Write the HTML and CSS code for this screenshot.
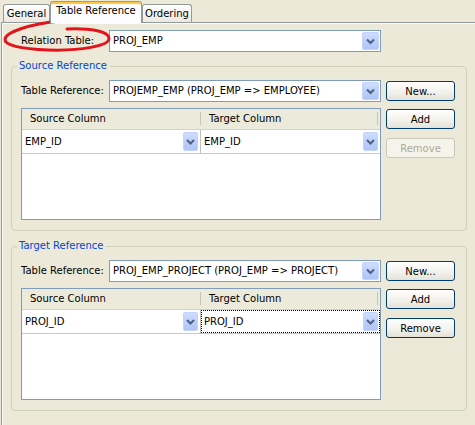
FILE: index.html
```html
<!DOCTYPE html>
<html>
<head>
<meta charset="utf-8">
<link rel="stylesheet" href="styles.css">
</head>
<body>
<div class="window">
  <div class="tabs">
    <div class="tab tab-general">General</div>
    <div class="tab active">Table Reference</div>
    <div class="tab tab-ordering">Ordering</div>
  </div>
  <div class="panel">
    <div class="relation-row">
      <span class="lbl">Relation Table:</span>
      <div class="combo"><span>PROJ_EMP</span><span class="drop"><svg viewBox="0 0 17 18" width="17" height="18"><path d="M5 7.5 L8.5 11 L12 7.5" /></svg></span></div>
    </div>

    <fieldset class="group">
      <legend>Source Reference</legend>
      <div class="group-grid">
        <span class="lbl">Table Reference:</span>
        <div class="combo"><span>PROJEMP_EMP (PROJ_EMP =&gt; EMPLOYEE)</span><span class="drop"><svg viewBox="0 0 17 18" width="17" height="18"><path d="M5 7.5 L8.5 11 L12 7.5" /></svg></span></div>
        <button class="btn">New...</button>
        <div class="gtable">
          <div class="thead">
            <div class="th th-first">Source Column</div>
            <div class="th th-second">Target Column</div>
          </div>
          <div class="tr">
            <div class="td td-first"><span>EMP_ID</span><span class="drop small"><svg viewBox="0 0 15 19" width="15" height="19"><path d="M4 8 L7.5 11.5 L11 8" /></svg></span></div>
            <div class="td td-second"><span>EMP_ID</span><span class="drop small"><svg viewBox="0 0 15 19" width="15" height="19"><path d="M4 8 L7.5 11.5 L11 8" /></svg></span></div>
          </div>
        </div>
        <div class="btn-col">
          <button class="btn">Add</button>
          <button class="btn" disabled>Remove</button>
        </div>
      </div>
    </fieldset>

    <fieldset class="group group-target">
      <legend>Target Reference</legend>
      <div class="group-grid">
        <span class="lbl">Table Reference:</span>
        <div class="combo"><span>PROJ_EMP_PROJECT (PROJ_EMP =&gt; PROJECT)</span><span class="drop"><svg viewBox="0 0 17 18" width="17" height="18"><path d="M5 7.5 L8.5 11 L12 7.5" /></svg></span></div>
        <button class="btn">New...</button>
        <div class="gtable">
          <div class="thead">
            <div class="th th-first">Source Column</div>
            <div class="th th-second">Target Column</div>
          </div>
          <div class="tr">
            <div class="td td-first"><span>PROJ_ID</span><span class="drop small"><svg viewBox="0 0 15 19" width="15" height="19"><path d="M4 8 L7.5 11.5 L11 8" /></svg></span></div>
            <div class="td td-second focus"><span>PROJ_ID</span><span class="drop small"><svg viewBox="0 0 15 19" width="15" height="19"><path d="M4 8 L7.5 11.5 L11 8" /></svg></span></div>
          </div>
        </div>
        <div class="btn-col">
          <button class="btn">Add</button>
          <button class="btn">Remove</button>
        </div>
      </div>
    </fieldset>
  </div>
</div>
<svg class="annotation" viewBox="0 0 475 60" width="475" height="60">
  <path d="M67 29 C90 28 108 31 109 38 C110 46 80 51 48 50 C20 49 4 45 5 39 C6 32 30 24 60 21" />
</svg>
</body>
</html>
```
FILE: styles.css
```css
* { box-sizing: border-box; }

html, body {
  margin: 0;
  padding: 0;
}

body {
  width: 475px;
  height: 425px;
  overflow: hidden;
  position: relative;
  background: #ece9d8;
  font-family: "DejaVu Sans", sans-serif;
  font-size: 10px;
  line-height: 12px;
  color: #000;
}

.window {
  padding-left: 1px;
}

/* Tabs */
.tabs {
  display: flex;
  align-items: flex-end;
  height: 22px;
  padding-left: 2px;
}

.tab {
  height: 18px;
  border: 1px solid #919b9c;
  border-bottom: none;
  border-radius: 3px 3px 0 0;
  background: linear-gradient(#ffffff, #f5f4ef 50%, #ebe9e0);
  display: flex;
  align-items: center;
  justify-content: center;
  white-space: nowrap;
}

.tab-general { width: 47px; }

.tab-ordering { width: 50px; }

.tab.active {
  width: 92px;
  height: 22px;
  margin-bottom: -1px;
  position: relative;
  z-index: 1;
  background: #fcfcfe;
  border-top: 1px solid #e68b2c;
  box-shadow: inset 0 2px 0 #ffc83c;
  padding-bottom: 3px;
}

/* Panel */
.panel {
  width: 474px;
  height: 403px;
  border-top: 1px solid #919b9c;
  border-left: 1px solid #919b9c;
  box-shadow: inset 1px 1px 0 #fbfbf8;
  padding: 7px 0 0 9px;
}

.relation-row {
  display: grid;
  grid-template-columns: 88px 272px;
  align-items: center;
  padding-left: 10px;
  height: 22px;
}

.lbl {
  white-space: nowrap;
}

/* Combo box */
.combo {
  height: 22px;
  border: 1px solid #7f9db9;
  background: #fff;
  display: flex;
  align-items: center;
  justify-content: space-between;
  padding-left: 3px;
  white-space: nowrap;
}

.drop {
  width: 17px;
  height: 18px;
  margin-right: 1px;
  border: 1px solid #c3d3fd;
  border-radius: 2px;
  background: linear-gradient(#d0ddff, #b9cdf9 60%, #b1c6f6);
  display: flex;
}

.drop svg {
  display: block;
  margin: -1px;
}

.drop path {
  fill: none;
  stroke: #4d6185;
  stroke-width: 2;
}

.drop.small {
  width: 15px;
  height: 19px;
}

/* Group boxes */
.group {
  width: 456px;
  margin: 8px 0 0 0;
  padding: 8px 9px 10px 9px;
  border: 1px solid #d0d0bf;
  border-radius: 4px;
  min-width: 0;
}

.group-target {
  margin-top: 9px;
}

.group legend {
  padding: 0 3px 0 2px;
  margin-left: -4px;
  line-height: 12px;
  color: #0046d5;
}

.group-grid {
  display: grid;
  grid-template-columns: 88px 272px 74px;
  row-gap: 6px;
  align-items: center;
}

/* Buttons */
.btn {
  justify-self: end;
  width: 69px;
  height: 20px;
  padding: 0;
  border: 1px solid #003c74;
  border-radius: 3px;
  background: linear-gradient(#ffffff, #f3f2ec 55%, #e4e2d7);
  font-family: inherit;
  font-size: 10px;
  color: #000;
}

.btn:disabled {
  border-color: #c9c7ba;
  background: #f5f4ea;
  color: #aca899;
}

.btn-col {
  justify-self: end;
  align-self: start;
  display: flex;
  flex-direction: column;
  gap: 9px;
  padding-top: 1px;
}

/* Table */
.gtable {
  grid-column: 1 / 3;
  align-self: start;
  height: 112px;
  border: 1px solid #7f9db9;
  background: #fff;
}

.thead {
  display: flex;
  height: 21px;
  padding: 3px 0 4px;
  background: #ebeadb;
  border-bottom: 1px solid #d6d2c2;
}

.th {
  display: flex;
  align-items: center;
  padding-left: 8px;
  border-right: 1px solid #c7c5b2;
}

.th-first { width: 179px; }
.th-second { width: 177px; }

.tr {
  display: flex;
  height: 24px;
  border-bottom: 1px solid #c8c8c8;
}

.td {
  display: flex;
  align-items: center;
  justify-content: space-between;
  padding-left: 3px;
  padding-right: 1px;
}

.td-first {
  width: 179px;
  border-right: 1px solid #c0c0c0;
}

.td-second {
  flex: 1;
}

.td.focus {
  outline: 1px dotted #000;
  outline-offset: -1px;
}

/* Red hand-drawn annotation */
.annotation {
  position: absolute;
  left: 0;
  top: 0;
  pointer-events: none;
}

.annotation path {
  fill: none;
  stroke: #e3141b;
  stroke-width: 3;
  stroke-linecap: round;
}
```
